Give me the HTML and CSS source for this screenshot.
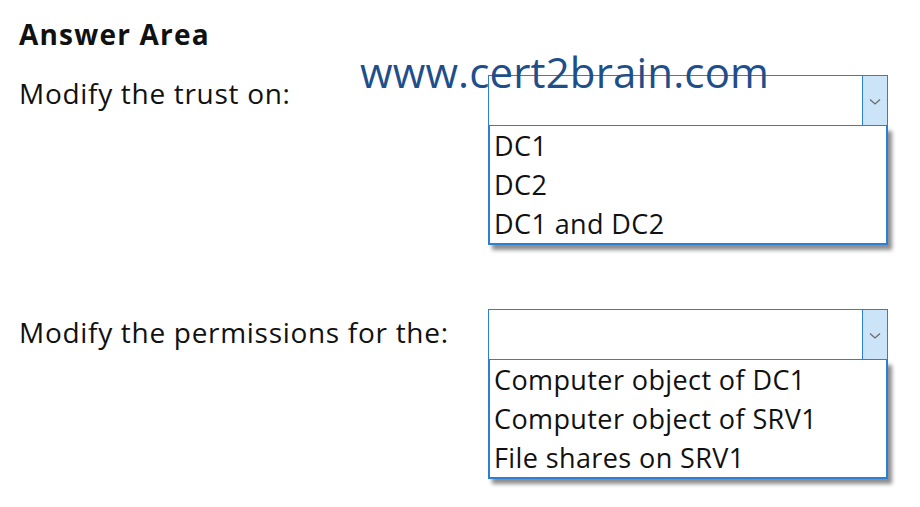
FILE: index.html
```html
<!DOCTYPE html>
<html>
<head>
<meta charset="utf-8">
<link rel="stylesheet" href="styles.css">
</head>
<body>
<div class="page">
  <h1 class="title">Answer Area</h1>
  <div class="row row-first">
    <div class="label">Modify the trust on:</div>
    <div class="combo">
      <div class="select">
        <div class="field"></div>
        <div class="btn"><svg width="12" height="8" viewBox="0 0 12 8"><path d="M1 1.5 L6 6 L11 1.5" fill="none" stroke="#6b6b6b" stroke-width="1.3"/></svg></div>
      </div>
      <ul class="list">
        <li>DC1</li>
        <li>DC2</li>
        <li>DC1 and DC2</li>
      </ul>
    </div>
  </div>
  <div class="row row-second">
    <div class="label label-second">Modify the permissions for the:</div>
    <div class="combo">
      <div class="select">
        <div class="field"></div>
        <div class="btn"><svg width="12" height="8" viewBox="0 0 12 8"><path d="M1 1.5 L6 6 L11 1.5" fill="none" stroke="#6b6b6b" stroke-width="1.3"/></svg></div>
      </div>
      <ul class="list">
        <li>Computer object of DC1</li>
        <li>Computer object of SRV1</li>
        <li>File shares on SRV1</li>
      </ul>
    </div>
  </div>
  <div class="watermark">www.cert2brain.com</div>
</div>
</body>
</html>
```
FILE: styles.css
```css
* { box-sizing: border-box; }
html, body { margin: 0; padding: 0; background: #fff; }
body {
  width: 920px;
  height: 507px;
  overflow: hidden;
  font-family: "Open Sans", "Lato", sans-serif;
  color: #111;
}
.page {
  position: relative;
  padding: 16px 0 0 19px;
}
.title {
  margin: 0;
  font-size: 28px;
  font-weight: 700;
  line-height: 36px;
  letter-spacing: 1.2px;
}
.row {
  display: flex;
  align-items: flex-start;
}
.row-first { margin-top: 23px; }
.row-second { margin-top: 64px; }
.label {
  width: 469px;
  font-size: 28px;
  line-height: 34px;
  letter-spacing: 0.7px;
  padding-top: 1px;
}
.label-second { padding-top: 6px; }
.combo {
  width: 400px;
}
.select {
  display: flex;
  height: 51px;
  border: 1px solid #2b7fd6;
  background: #fff;
}
.field { flex: 1; }
.btn {
  width: 25px;
  background: #cce4f7;
  border-left: 1px solid #2b7fd6;
  display: flex;
  align-items: center;
  justify-content: center;
  padding-top: 2px;
}
.list {
  list-style: none;
  margin: 0;
  padding: 0 0 0 4px;
  height: 119px;
  border: 2px solid #2b7fd6;
  border-top: 0;
  background: #fff;
  box-shadow: 4px 5px 4px rgba(0,0,0,0.45);
}
.list li {
  font-size: 27px;
  line-height: 39px;
  letter-spacing: 0.4px;
  color: #111;
}
.watermark {
  position: absolute;
  left: 360px;
  top: 48px;
  font-size: 42px;
  line-height: 48px;
  letter-spacing: 0.15px;
  color: #1f4f8a;
  font-family: "Open Sans", "Lato", sans-serif;
}
```
